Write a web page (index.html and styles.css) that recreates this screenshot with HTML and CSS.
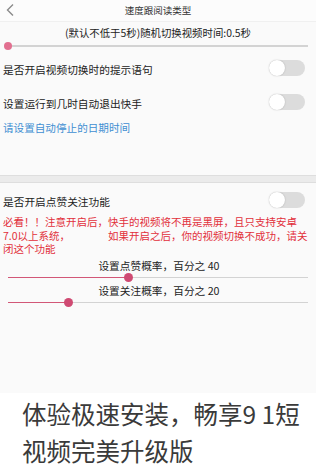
FILE: index.html
```html
<!DOCTYPE html>
<html lang="zh">
<head>
<meta charset="utf-8">
<link rel="stylesheet" href="styles.css">
</head>
<body>
<div class="app">
  <div class="phone">
    <div class="header">
      <svg class="back" width="10" height="14" viewBox="0 0 10 14"><polyline points="8,1.5 2.5,7 8,12.5" fill="none" stroke="#8a8a8a" stroke-width="1.4"/></svg>
      <div class="title">速度跟阅读类型</div>
      <div></div>
    </div>
    <div class="subtitle">(默认不低于5秒)随机切换视频时间:0.5秒</div>
    <div class="slider"><div class="track"><div class="fill" style="width:0%"></div><div class="thumb light" style="left:0%"></div></div></div>
    <div class="row first"><span>是否开启视频切换时的提示语句</span><span class="toggle"></span></div>
    <div class="row"><span>设置运行到几时自动退出快手</span><span class="toggle"></span></div>
    <div class="link">请设置自动停止的日期时间</div>
    <div class="divider"></div>
    <div class="row short"><span>是否开启点赞关注功能</span><span class="toggle"></span></div>
    <div class="warn">必看！！注意开启后，快手的视频将不再是黑屏，且只支持安卓<br>7.0以上系统，<span class="gap"></span>如果开启之后，你的视频切换不成功，请关<br>闭这个功能</div>
    <div class="label">设置点赞概率，百分之 40</div>
    <div class="slider"><div class="track"><div class="fill" style="width:40%"></div><div class="thumb" style="left:40%"></div></div></div>
    <div class="label">设置关注概率，百分之 20</div>
    <div class="slider"><div class="track"><div class="fill" style="width:20%"></div><div class="thumb" style="left:20%"></div></div></div>
  </div>
  <div class="caption">体验极速安装，畅享9 1短视频完美升级版</div>
</div>
</body>
</html>
```
FILE: styles.css
```css
* { box-sizing: border-box; }
html, body { margin: 0; padding: 0; background: #ffffff; }
body { font-family: "Noto Sans CJK SC", "Noto Sans", sans-serif; }
.app { width: 316px; height: 474px; overflow: hidden; }
.phone { background: #fafafa; height: 393px; display: flex; flex-direction: column; }
.header { height: 22px; display: grid; grid-template-columns: 30px 1fr 30px; align-items: center; background: #fcfcfc; border-bottom: 1px solid #f0f0f0; }
.back { margin-left: 5px; margin-top: -2px; }
.title { text-align: center; font-size: 9.5px; color: #333; line-height: 12px; margin-top: -2px; }
.subtitle { margin-top: 2px; height: 18px; line-height: 18px; font-size: 10.4px; color: #222; text-align: center; }
.slider { height: 8px; padding: 0 8px 0 8px; display: flex; align-items: center; }
.track { position: relative; flex: 1; height: 1.4px; background: #d3d3d3; }
.fill { position: absolute; left: 0; top: 0; bottom: 0; background: #d25777; }
.thumb { position: absolute; top: 50%; width: 9px; height: 9px; margin: -4.5px 0 0 -4.5px; border-radius: 50%; background: #cf4a72; }
.thumb.light { background: #e27090; width: 8px; height: 8px; margin: -4px 0 0 -4px; }
.row { height: 34px; display: flex; align-items: center; justify-content: space-between; padding: 0 11px 0 3px; font-size: 10.7px; color: #222; }
.row.first { margin-top: 1px; }
.row span:first-child { margin-top: 3px; }
.row.short { height: 31px; margin-top: 1px; }
.toggle { width: 36px; height: 16px; border-radius: 8px; background: #dcdcdc; position: relative; }
.toggle::before { content: ""; position: absolute; left: 0; top: 0; width: 16px; height: 16px; border-radius: 50%; background: #fff; box-shadow: 0 0 1.5px rgba(0,0,0,0.25); }
.link { height: 18px; line-height: 18px; padding-left: 3px; font-size: 10.6px; color: #3f8fd2; }
.divider { margin-top: 38px; height: 8px; background: #ebebeb; border-top: 1px solid #dedede; border-bottom: 1px solid #dedede; }
.warn { padding-left: 3px; font-size: 10.5px; line-height: 13.5px; color: #e2303a; }
.gap { display: inline-block; width: 38px; }
.label { margin-top: 2px; height: 16px; line-height: 16px; font-size: 10.7px; color: #222; text-align: center; padding-left: 2px; }
.slider + .label { margin-top: 1px; }
.caption { padding: 2px 0 0 22px; font-size: 24.5px; line-height: 37px; color: #3a3a3a; }
```
